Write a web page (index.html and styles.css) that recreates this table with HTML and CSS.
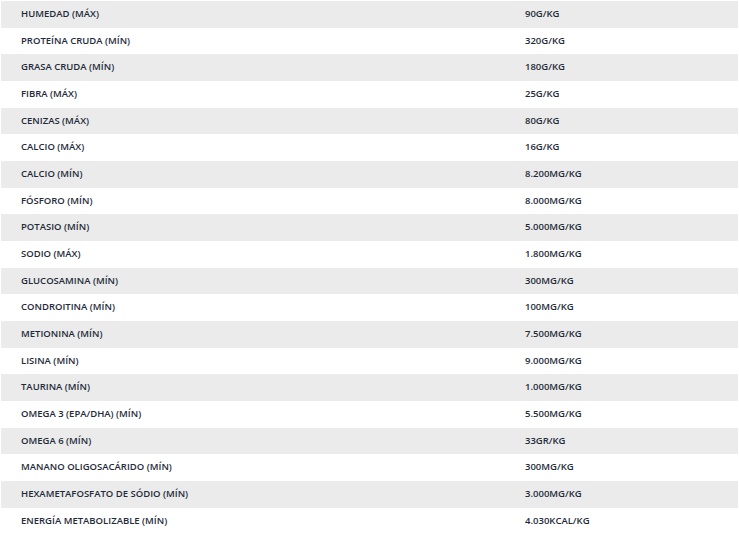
FILE: index.html
```html
<!DOCTYPE html>
<html lang="es">
<head>
<meta charset="utf-8">
<link rel="stylesheet" href="styles.css">
</head>
<body>
<div class="specs">
  <div class="row"><div class="name">HUMEDAD (MÁX)</div><div class="val">90G/KG</div></div>
  <div class="row"><div class="name">PROTEÍNA CRUDA (MÍN)</div><div class="val">320G/KG</div></div>
  <div class="row"><div class="name">GRASA CRUDA (MÍN)</div><div class="val">180G/KG</div></div>
  <div class="row"><div class="name">FIBRA (MÁX)</div><div class="val">25G/KG</div></div>
  <div class="row"><div class="name">CENIZAS (MÁX)</div><div class="val">80G/KG</div></div>
  <div class="row"><div class="name">CALCIO (MÁX)</div><div class="val">16G/KG</div></div>
  <div class="row"><div class="name">CALCIO (MÍN)</div><div class="val">8.200MG/KG</div></div>
  <div class="row"><div class="name">FÓSFORO (MÍN)</div><div class="val">8.000MG/KG</div></div>
  <div class="row"><div class="name">POTASIO (MÍN)</div><div class="val">5.000MG/KG</div></div>
  <div class="row"><div class="name">SODIO (MÁX)</div><div class="val">1.800MG/KG</div></div>
  <div class="row"><div class="name">GLUCOSAMINA (MÍN)</div><div class="val">300MG/KG</div></div>
  <div class="row"><div class="name">CONDROITINA (MÍN)</div><div class="val">100MG/KG</div></div>
  <div class="row"><div class="name">METIONINA (MÍN)</div><div class="val">7.500MG/KG</div></div>
  <div class="row"><div class="name">LISINA (MÍN)</div><div class="val">9.000MG/KG</div></div>
  <div class="row"><div class="name">TAURINA (MÍN)</div><div class="val">1.000MG/KG</div></div>
  <div class="row"><div class="name">OMEGA 3 (EPA/DHA) (MÍN)</div><div class="val">5.500MG/KG</div></div>
  <div class="row"><div class="name">OMEGA 6 (MÍN)</div><div class="val">33GR/KG</div></div>
  <div class="row"><div class="name">MANANO OLIGOSACÁRIDO (MÍN)</div><div class="val">300MG/KG</div></div>
  <div class="row"><div class="name">HEXAMETAFOSFATO DE SÓDIO (MÍN)</div><div class="val">3.000MG/KG</div></div>
  <div class="row"><div class="name">ENERGÍA METABOLIZABLE (MÍN)</div><div class="val">4.030KCAL/KG</div></div>
</div>
</body>
</html>
```

FILE: styles.css
```css
html, body {
  margin: 0;
  padding: 0;
  background: #ffffff;
}
body {
  padding: 1px 1px 0 1px;
  font-family: "Open Sans", "Liberation Sans", sans-serif;
  font-weight: 600;
  font-size: 9.5px;
  color: #1f2b3a;
}
.specs {
  width: 737px;
  display: grid;
  grid-auto-rows: 26.68px;
}
.row {
  display: grid;
  grid-template-columns: 504px 1fr;
  align-items: center;
}
.row:nth-child(odd) {
  background: #ebebeb;
}
.name, .val {
  padding-left: 20px;
  padding-bottom: 1px;
  line-height: 14px;
}
```
